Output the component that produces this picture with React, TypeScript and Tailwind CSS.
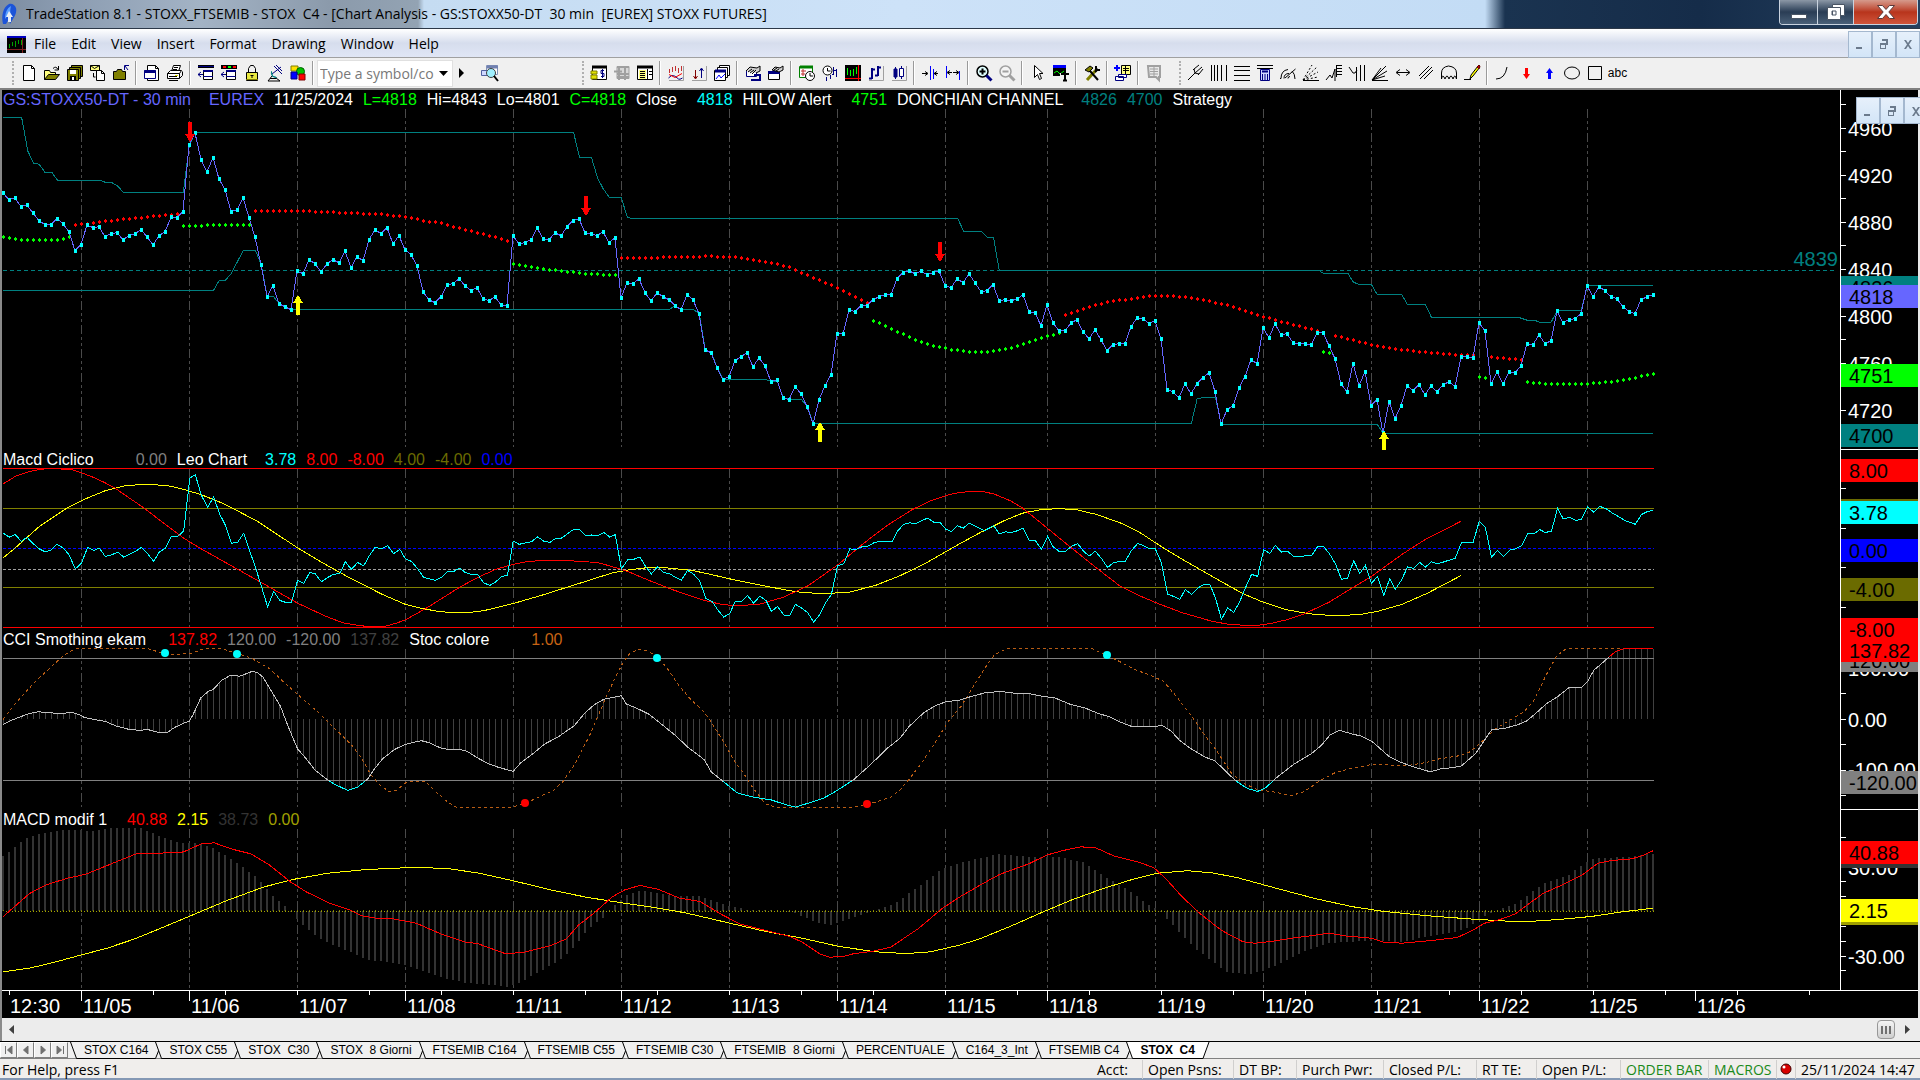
import React from "react";

type Scale = { sx: number; sy: number; dy: number };

// Every series is a flat [x, y, x, y, ...] list in survey units; a scale turns it into plot pixels.
const PRICE: Scale = { sx: 2.45, sy: 3, dy: 8 };
const LEO: Scale = { sx: 1.6333, sy: 2.8, dy: 28 };
const CCI: Scale = { sx: 1.6333, sy: 2.8, dy: 208 };
const MACD: Scale = { sx: 1.6333, sy: 2.8, dy: 388 };

const BARS = 276;
const barX = (i: number) => 3 + 6 * i;
const yOf = (v: number, s: Scale) => v / s.sy - s.dy;

const trace = (d: number[], s: Scale) => {
  const out: string[] = [];
  for (let i = 0; i < d.length; i += 2) {
    out.push(`${(d[i] / s.sx).toFixed(1)},${yOf(d[i + 1], s).toFixed(1)}`);
  }
  return out.join(" ");
};

const shift = (d: number[], by: number) => d.map((v, i) => (i % 2 === 0 ? v + by : v));

// linear interpolation inside a flat series
const at = (d: number[], x: number) => {
  if (x <= d[0]) return d[1];
  for (let i = 2; i < d.length; i += 2) {
    if (x <= d[i]) {
      const t = (x - d[i - 2]) / (d[i] - d[i - 2]);
      return d[i - 1] + t * (d[i + 1] - d[i - 1]);
    }
  }
  return d[d.length - 1];
};

const CLOSES = [
  279, 299, 294, 320, 315, 339, 362, 374, 374, 356, 371, 396, 452, 434, 375, 383, 380, 410, 401, 398, 419, 407, 401,
  389, 410, 434, 407, 395, 352, 353, 335, 134, 99, 179, 215, 173, 237, 269, 335, 329, 293, 353, 411, 494, 590, 557, 611,
  620, 629, 513, 521, 479, 491, 515, 491, 479, 488, 453, 503, 470, 482, 419, 389, 401, 383, 431, 407, 449, 464, 497,
  575, 599, 608, 590, 554, 551, 536, 557, 572, 563, 596, 602, 590, 614, 617, 407, 431, 428, 419, 383, 416, 419, 398,
  407, 380, 362, 356, 398, 401, 407, 395, 428, 413, 593, 548, 551, 536, 578, 602, 578, 590, 599, 617, 629, 584, 599,
  641, 749, 758, 803, 839, 830, 782, 770, 758, 800, 773, 797, 845, 839, 893, 899, 860, 881, 920, 971, 899, 857, 824,
  701, 701, 629, 635, 617, 617, 599, 590, 584, 584, 536, 518, 512, 521, 513, 524, 518, 513, 557, 563, 536, 548, 521,
  548, 575, 572, 554, 602, 599, 602, 597, 584, 635, 638, 677, 614, 668, 692, 692, 668, 659, 695, 716, 689, 719, 752,
  734, 731, 731, 680, 653, 656, 671, 662, 716, 869, 875, 893, 851, 881, 851, 833, 818, 875, 973, 929, 917, 863, 830,
  779, 791, 683, 713, 671, 704, 701, 728, 731, 731, 734, 698, 698, 737, 776, 851, 875, 791, 857, 815, 917, 899, 1000,
  905, 956, 917, 857, 872, 854, 884, 857, 875, 854, 845, 860, 770, 770, 773, 668, 692, 851, 815, 851, 815, 818, 797,
  731, 734, 704, 731, 722, 632, 668, 659, 656, 641, 557, 590, 560, 572, 590, 596, 620, 635, 641, 599, 590, 584,
];

const UPPER = [
  7, 52, 53, 52, 68, 153, 82, 190, 96, 193, 110, 217, 127, 217, 141, 241, 244, 241, 258, 247, 273, 247, 288, 258, 302,
  277, 449, 277, 464, 134, 479, 97, 1405, 97, 1420, 172, 1449, 172, 1464, 234, 1478, 267, 1493, 292, 1522, 292, 1537,
  352, 1547, 355, 2346, 355, 2361, 394, 2404, 394, 2419, 412, 2434, 412, 2448, 511, 3231, 511, 3242, 520, 3302, 520,
  3316, 547, 3330, 553, 3360, 553, 3374, 583, 3434, 583, 3448, 613, 3492, 613, 3507, 652, 3720, 652, 3742, 661, 3760,
  661, 3772, 667, 3800, 667, 3816, 631, 3874, 631, 3889, 556, 4050, 556,
];

const LOWER = [
  7, 571, 523, 571, 537, 541, 552, 541, 566, 522, 581, 487, 596, 451, 626, 451, 640, 494, 655, 590, 670, 590, 684, 611,
  714, 629, 729, 628, 1640, 628, 1654, 617, 1669, 629, 1699, 629, 1713, 641, 1728, 749, 1743, 758, 1757, 803, 1772, 839,
  1878, 839, 1890, 845, 1905, 845, 1919, 895, 1934, 898, 1963, 898, 1978, 920, 1993, 971, 2919, 970, 2933, 897, 2948,
  892, 2978, 892, 2992, 973, 3374, 973, 3389, 1000, 4050, 1000,
];

// x is the bar number here
const HILOW: { up: boolean; d: number[] }[] = [
  { up: true, d: [0, 410, 3, 419, 9, 419, 11, 412] },
  { up: false, d: [12, 375, 16, 366, 20, 358, 24, 351, 29, 342] },
  { up: true, d: [30, 378, 33, 377, 34, 375, 41, 375] },
  { up: false, d: [42, 332, 50, 333, 58, 339, 63, 343, 67, 351, 70, 362, 73, 370, 76, 385, 79, 399, 81, 407, 84, 423] },
  { up: true, d: [85, 491, 88, 500, 91, 509, 94, 515, 97, 521, 100, 524, 102, 524] },
  {
    up: false,
    d: [
      103, 474, 107, 474, 112, 471, 118, 469, 122, 471, 124, 476, 127, 485, 129, 493, 131, 502, 133, 518, 135, 533, 139,
      564, 144, 608,
    ],
  },
  {
    up: true,
    d: [
      145, 662, 149, 695, 152, 720, 154, 732, 156, 741, 158, 749, 160, 753, 162, 756, 164, 756, 166, 750, 168, 744, 170,
      732, 172, 720, 176, 698,
    ],
  },
  {
    up: false,
    d: [
      177, 645, 181, 620, 183, 611, 185, 603, 188, 597, 190, 591, 192, 587, 194, 587, 197, 591, 199, 597, 203, 611, 205,
      620, 209, 645, 213, 665, 219, 692,
    ],
  },
  { up: true, d: [220, 756, 221, 759] },
  { up: false, d: [222, 708, 225, 720, 228, 735, 232, 748, 235, 753, 240, 762, 243, 765, 245, 766] },
  { up: true, d: [246, 830, 247, 833] },
  { up: false, d: [248, 771, 250, 774, 253, 779] },
  { up: true, d: [254, 846, 258, 852, 264, 852, 269, 843, 271, 837, 273, 828, 275, 822] },
];

const LEO_LINE = [
  5, 261, 15, 272, 25, 265, 35, 284, 44, 272, 54, 290, 64, 305, 74, 313, 83, 309, 93, 292, 103, 302, 113, 322, 123, 361,
  133, 345, 143, 301, 153, 309, 162, 303, 172, 326, 182, 322, 192, 314, 202, 328, 211, 320, 221, 312, 231, 301, 241,
  318, 251, 340, 260, 314, 270, 303, 280, 270, 290, 270, 300, 255, 310, 107, 319, 97, 329, 155, 339, 188, 349, 160, 359,
  208, 368, 238, 378, 289, 388, 287, 398, 261, 408, 312, 417, 355, 427, 410, 437, 467, 447, 424, 457, 449, 467, 455,
  476, 455, 486, 393, 496, 401, 506, 371, 515, 375, 525, 397, 535, 385, 545, 376, 555, 374, 564, 341, 574, 362, 584,
  343, 594, 352, 604, 322, 613, 300, 623, 305, 633, 296, 643, 318, 653, 306, 662, 332, 672, 340, 682, 360, 692, 385,
  702, 389, 711, 393, 721, 385, 731, 368, 741, 368, 751, 359, 760, 371, 770, 376, 780, 376, 790, 400, 800, 407, 809,
  398, 819, 383, 829, 378, 838, 283, 848, 292, 858, 288, 868, 285, 878, 271, 888, 283, 898, 287, 907, 276, 917, 275,
  927, 262, 937, 250, 946, 250, 956, 267, 966, 266, 976, 268, 986, 259, 996, 272, 1005, 265, 1015, 361, 1025, 336, 1035,
  334, 1045, 328, 1055, 355, 1064, 375, 1074, 355, 1084, 371, 1094, 375, 1104, 385, 1113, 392, 1123, 365, 1133, 376,
  1143, 395, 1153, 444, 1163, 452, 1172, 475, 1182, 496, 1192, 486, 1201, 451, 1211, 453, 1221, 436, 1231, 457, 1241,
  437, 1251, 449, 1260, 480, 1270, 466, 1280, 490, 1290, 491, 1299, 460, 1309, 470, 1319, 483, 1329, 510, 1339, 489,
  1349, 455, 1358, 432, 1368, 352, 1378, 347, 1388, 305, 1398, 306, 1408, 299, 1417, 298, 1427, 288, 1437, 283, 1457,
  284, 1466, 255, 1476, 236, 1486, 232, 1496, 234, 1505, 226, 1515, 219, 1525, 230, 1535, 230, 1545, 250, 1554, 256,
  1564, 240,
  ...shift(
    [
      5, 247, 15, 233, 27, 243, 40, 254, 55, 240, 64, 263, 74, 257, 84, 259, 94, 254, 103, 246, 113, 281, 123, 281, 133,
      306, 143, 270, 152, 299, 162, 312, 172, 312, 182, 298, 192, 290, 202, 312, 211, 325, 221, 311, 231, 332, 241, 357,
      250, 344, 260, 340, 270, 340, 280, 309, 290, 290, 299, 295, 309, 304, 319, 305, 329, 344, 339, 432, 349, 438, 359,
      446, 368, 419, 378, 432, 388, 415, 398, 405, 408, 404, 417, 441, 427, 502, 437, 470, 447, 483, 457, 452, 466, 415,
      476, 376, 486, 382, 496, 307, 506, 318, 515, 295, 525, 314, 535, 312, 545, 326, 574, 324, 584, 299, 594, 298, 604,
      320, 613, 346, 623, 390, 633, 387, 643, 338, 653, 374, 662, 351, 672, 401, 682, 382, 692, 435, 702, 388, 711, 418,
      721, 392, 731, 355, 741, 360, 751, 343, 760, 356, 770, 341, 780, 347, 809, 331, 819, 287, 838, 287, 848, 228, 858,
      244, 868, 328, 878, 309, 888, 326, 898, 308, 907, 305, 917, 296, 927, 262, 937, 263, 947, 251, 956, 259, 966, 255,
      976, 191, 985, 220, 996, 217, 1006, 225, 1015, 222, 1025, 188, 1035, 202, 1045, 186, 1055, 192, 1065, 204, 1088,
      227, 1103, 236, 1113, 209, 1123, 200, 1132, 197,
    ],
    1568
  ),
];

const CYCLE_RED = [
  5, 123, 25, 102, 45, 90, 65, 82, 80, 80, 115, 82, 135, 93, 155, 106, 172, 120, 188, 135, 205, 155, 235, 190, 265, 230,
  300, 275, 330, 306, 387, 361, 440, 412, 486, 457, 530, 492, 560, 512, 585, 519, 605, 523, 628, 522, 645, 514, 662,
  504, 700, 467, 750, 413, 780, 385, 810, 362, 838, 348, 860, 341, 880, 338, 930, 338, 975, 343, 995, 352, 1025, 368,
  1060, 393, 1100, 420, 1150, 449, 1180, 461, 1205, 464, 1240, 460, 1280, 440, 1320, 408, 1368, 350, 1410, 290, 1450,
  238, 1490, 195, 1520, 170, 1550, 153, 1568, 147, 1580, 145, 1608, 145, 1625, 152, 1650, 170, 1668, 188, 1690, 218,
  1740, 288, 1790, 357, 1830, 410, 1860, 435, 1890, 457, 1930, 483, 1980, 508, 2010, 517, 2050, 520, 2075, 514, 2100,
  504, 2130, 487, 2170, 455, 2200, 423, 2240, 382, 2290, 320, 2330, 276, 2386, 228,
];

const CYCLE_YELLOW = [
  5, 330, 25, 302, 65, 241, 110, 190, 135, 168, 172, 142, 205, 128, 235, 124, 272, 127, 300, 138, 330, 154, 365, 178,
  420, 227, 486, 302, 530, 347, 570, 385, 625, 433, 662, 460, 690, 472, 720, 481, 760, 484, 790, 478, 838, 458, 890,
  432, 960, 394, 1000, 372, 1030, 363, 1060, 357, 1090, 358, 1130, 365, 1160, 376, 1200, 392, 1250, 409, 1300, 425,
  1340, 430, 1385, 427, 1430, 407, 1470, 380, 1510, 347, 1568, 290, 1600, 260, 1640, 226, 1670, 205, 1700, 195, 1731,
  192, 1760, 196, 1790, 208, 1830, 232, 1860, 257, 1900, 302, 1940, 343, 1990, 392, 2030, 430, 2060, 452, 2100, 475,
  2140, 487, 2180, 492, 2220, 489, 2250, 480, 2290, 460, 2330, 430, 2386, 380,
];

const CCI_LINE = [
  5, 796, 20, 784, 35, 774, 50, 765, 62, 761, 80, 763, 95, 766, 118, 763, 128, 768, 138, 777, 152, 782, 172, 788, 190,
  801, 210, 810, 230, 813, 240, 810, 262, 820, 274, 818, 285, 805, 300, 793, 309, 788, 315, 770, 328, 722, 340, 704,
  348, 699, 362, 673, 375, 660, 392, 661, 400, 656, 410, 649, 420, 650, 430, 665, 445, 708, 458, 745, 470, 800, 486,
  865, 500, 892, 515, 925, 530, 945, 545, 963, 568, 981, 584, 972, 600, 950, 612, 920, 625, 892, 645, 866, 662, 852,
  688, 842, 700, 847, 712, 857, 725, 865, 752, 867, 762, 871, 785, 895, 800, 908, 815, 917, 838, 928, 850, 905, 870,
  879, 890, 851, 910, 833, 938, 800, 955, 765, 970, 742, 986, 726, 1015, 716, 1023, 739, 1045, 755, 1060, 768, 1080,
  795, 1105, 830, 1123, 860, 1150, 895, 1162, 930, 1182, 957, 1204, 988, 1228, 999, 1260, 1008, 1285, 1022, 1299, 1028,
  1320, 1017, 1345, 1003, 1365, 984, 1395, 950, 1420, 912, 1450, 862, 1470, 835, 1485, 802, 1510, 762, 1530, 742, 1545,
  733, 1568, 728,
  ...shift(
    [
      15, 720, 40, 708, 65, 704, 90, 709, 115, 711, 135, 718, 155, 722, 180, 740, 205, 751, 225, 765, 245, 776, 262,
      790, 280, 802, 320, 802, 330, 799, 345, 815, 358, 840, 375, 862, 400, 888, 415, 897, 430, 920, 440, 938, 455, 960,
      470, 976, 486, 984, 500, 973, 515, 948, 545, 908, 575, 877, 590, 855, 605, 825, 620, 813, 640, 823, 655, 829, 672,
      843, 685, 862, 700, 885, 718, 901, 740, 915, 768, 929, 785, 921, 800, 918, 818, 914, 830, 896, 842, 878, 855, 845,
      868, 812, 890, 807, 910, 798, 925, 787, 940, 766, 958, 738, 975, 720, 995, 693, 1015, 693, 1025, 676, 1035, 645,
      1060, 608, 1070, 593, 1085, 584, 1132, 584,
    ],
    1568
  ),
];

const STOC = [
  5, 782, 25, 738, 60, 672, 103, 605, 115, 592, 128, 583, 240, 583, 265, 597, 290, 601, 315, 596, 335, 583, 360, 583,
  388, 598, 410, 610, 440, 640, 465, 680, 486, 712, 520, 763, 545, 805, 575, 855, 590, 890, 605, 935, 618, 963, 635,
  984, 648, 980, 665, 957, 695, 957, 712, 985, 730, 1012, 745, 1028, 838, 1028, 865, 1012, 905, 980, 920, 955, 940, 905,
  965, 820, 990, 720, 1005, 665, 1018, 622, 1030, 595, 1045, 586, 1060, 592, 1075, 610, 1090, 640, 1110, 690, 1130, 730,
  1145, 752, 1158, 780, 1180, 840, 1200, 900, 1215, 935, 1230, 975, 1250, 1018, 1265, 1028, 1395, 1028, 1430, 1014,
  1455, 1000, 1470, 980, 1485, 950, 1505, 905, 1530, 840, 1550, 785, 1570, 745, 1590, 690, 1610, 635, 1625, 600, 1645,
  584, 1783, 584, 1800, 597, 1825, 617, 1850, 640, 1880, 660, 1900, 675, 1920, 715, 1945, 770, 1965, 820, 1985, 865,
  2010, 930, 2030, 960, 2055, 980, 2080, 985, 2108, 996, 2130, 985, 2155, 955, 2180, 932, 2210, 918, 2240, 909, 2300,
  911, 2330, 903, 2350, 893, 2380, 885, 2400, 874, 2415, 853, 2440, 812, 2470, 780, 2490, 760, 2505, 730, 2525, 660,
  2542, 605, 2558, 584, 2700, 584,
];

const MACD_HIST = [
  5, 1165, 25, 1140, 45, 1112, 65, 1104, 90, 1094, 110, 1092, 150, 1094, 165, 1093, 180, 1087, 230, 1087, 245, 1098,
  270, 1115, 300, 1130, 320, 1127, 345, 1140, 370, 1166, 400, 1200, 420, 1225, 445, 1275, 470, 1312, 490, 1350, 520,
  1395, 560, 1425, 600, 1455, 650, 1465, 680, 1480, 720, 1504, 760, 1520, 800, 1525, 830, 1533, 850, 1518, 880, 1490,
  920, 1450, 935, 1425, 960, 1370, 985, 1338, 1000, 1310, 1020, 1278, 1045, 1262, 1070, 1266, 1100, 1278, 1140, 1277,
  1160, 1288, 1190, 1305, 1220, 1315, 1280, 1318, 1300, 1326, 1340, 1355, 1360, 1358, 1390, 1340, 1430, 1315, 1460,
  1300, 1500, 1250, 1540, 1200, 1568, 1185, 1600, 1171, 1632, 1159, 1670, 1166, 1730, 1168, 1770, 1183, 1800, 1218,
  1840, 1258, 1880, 1305, 1895, 1320, 1905, 1340, 1950, 1420, 1980, 1460, 2005, 1490, 2040, 1495, 2060, 1488, 2080,
  1474, 2110, 1449, 2140, 1425, 2170, 1408, 2250, 1401, 2290, 1407, 2320, 1393, 2375, 1378, 2400, 1363, 2430, 1327,
  2450, 1315, 2480, 1295, 2520, 1242, 2560, 1220, 2585, 1190, 2605, 1170, 2660, 1168, 2700, 1158,
];

const MACD_RED = [
  5, 1335, 20, 1312, 48, 1270, 75, 1246, 110, 1227, 140, 1216, 180, 1188, 225, 1157, 290, 1156, 300, 1153, 330, 1130,
  350, 1128, 380, 1146, 410, 1159, 440, 1190, 475, 1238, 500, 1265, 540, 1298, 570, 1315, 590, 1332, 615, 1339, 640,
  1340, 680, 1353, 720, 1383, 760, 1406, 780, 1410, 825, 1438, 855, 1435, 900, 1415, 925, 1397, 945, 1358, 970, 1325,
  1000, 1279, 1020, 1260, 1045, 1247, 1075, 1258, 1110, 1283, 1143, 1292, 1180, 1330, 1210, 1356, 1250, 1373, 1290,
  1390, 1310, 1406, 1340, 1440, 1355, 1448, 1375, 1447, 1395, 1438, 1425, 1432, 1455, 1420, 1500, 1368, 1540, 1310,
  1568, 1279, 1600, 1247, 1632, 1217, 1680, 1187, 1710, 1162, 1735, 1150, 1765, 1139, 1790, 1142, 1820, 1165, 1860,
  1182, 1885, 1198, 1905, 1230, 1930, 1278, 1960, 1326, 1995, 1373, 2030, 1405, 2050, 1409, 2080, 1403, 2110, 1395,
  2150, 1386, 2170, 1381, 2200, 1389, 2240, 1395, 2260, 1406, 2290, 1409, 2340, 1401, 2380, 1393, 2405, 1373, 2425,
  1353, 2450, 1343, 2475, 1327, 2500, 1295, 2520, 1270, 2555, 1243, 2585, 1217, 2610, 1185, 2630, 1178, 2665, 1173,
  2685, 1162, 2700, 1150,
];

const MACD_YELLOW = [
  5, 1489, 50, 1478, 90, 1462, 130, 1443, 175, 1423, 220, 1397, 270, 1362, 320, 1326, 370, 1290, 430, 1252, 480, 1230,
  535, 1213, 590, 1204, 640, 1199, 690, 1197, 735, 1201, 780, 1212, 838, 1234, 900, 1260, 960, 1281, 1020, 1297, 1065,
  1308, 1120, 1324, 1190, 1352, 1250, 1376, 1310, 1395, 1370, 1418, 1430, 1433, 1480, 1438, 1520, 1433, 1568, 1414,
  1600, 1397, 1650, 1362, 1700, 1324, 1750, 1288, 1800, 1257, 1850, 1230, 1890, 1213, 1940, 1206, 1980, 1212, 2020,
  1225, 2080, 1253, 2150, 1285, 2210, 1307, 2260, 1320, 2330, 1332, 2400, 1341, 2460, 1347, 2500, 1348, 2550, 1342,
  2600, 1334, 2650, 1321, 2700, 1311,
];

const DAYS: { x: number; label: string }[] = [
  { x: 81, label: "11/05" },
  { x: 189, label: "11/06" },
  { x: 297, label: "11/07" },
  { x: 405, label: "11/08" },
  { x: 513, label: "11/11" },
  { x: 621, label: "11/12" },
  { x: 729, label: "11/13" },
  { x: 837, label: "11/14" },
  { x: 945, label: "11/15" },
  { x: 1047, label: "11/18" },
  { x: 1155, label: "11/19" },
  { x: 1263, label: "11/20" },
  { x: 1371, label: "11/21" },
  { x: 1479, label: "11/22" },
  { x: 1587, label: "11/25" },
  { x: 1695, label: "11/26" },
];
const LONG_TICKS = [81, 189, 405, 621, 837, 1047, 1263, 1479, 1695];
const SHORT_TICKS = [
  9, 153, 225, 297, 369, 441, 513, 585, 657, 729, 801, 873, 945, 1017, 1089, 1161, 1233, 1305, 1377, 1449, 1521, 1593,
  1665, 1737, 1809,
];

/* ---------- chart ---------- */

function DayLines({ bottom }: { bottom: number }) {
  return (
    <g stroke="#4a4a4a" strokeDasharray="9 3 3 3 3 3">
      {DAYS.slice(0, -1).map((d) => (
        <line key={d.x} x1={d.x + 0.5} x2={d.x + 0.5} y1={1} y2={bottom} />
      ))}
    </g>
  );
}

function Level({ y, color, dash, to = 1654 }: { y: number; color: string; dash?: string; to?: number }) {
  return <line x1={3} x2={to} y1={y} y2={y} stroke={color} strokeDasharray={dash} />;
}

function Arrow({ x, y, down }: { x: number; y: number; down?: boolean }) {
  const d = down ? "M-2 -19h4v12h3l-5 8l-5 -8h3z" : "M-2 19h4v-12h3l-5 -8l-5 8h3z";
  return <path d={d} transform={`translate(${x} ${y})`} fill={down ? "#ff0000" : "#ffff00"} />;
}

function PricePlot() {
  const closeLine = CLOSES.map((c, i) => `${barX(i)},${yOf(c, PRICE).toFixed(1)}`).join(" ");
  return (
    <svg className="block h-[342px] w-full" shapeRendering="crispEdges" fill="none">
      <DayLines bottom={339} />
      <polyline points={trace(UPPER, PRICE)} stroke="#008080" />
      <polyline points={trace(LOWER, PRICE)} stroke="#008080" />
      <Level y={162.5} color="#008080" dash="4 3" to={1836} />
      <text x={1838} y={158} textAnchor="end" fill="#008080" fontSize={20}>
        4839
      </text>
      {HILOW.map((seg) => {
        const first = seg.d[0];
        const last = seg.d[seg.d.length - 2];
        const dots = [];
        for (let i = first; i <= last; i++) {
          const y = Math.round(yOf(at(seg.d, i), PRICE));
          dots.push(`M${barX(i)} ${y - 2}h1v1h1v2h-1v1h-1v-1h-1v-2h1z`);
        }
        return <path key={first} d={dots.join("")} fill={seg.up ? "#00ff00" : "#ff0000"} />;
      })}
      <polyline points={closeLine} stroke="#6666ff" />
      <path
        fill="#00ffff"
        d={CLOSES.map((c, i) => `M${barX(i) - 1} ${Math.round(yOf(c, PRICE)) - 2}h3v4h-3z`).join("")}
      />
      <Arrow x={190} y={33} down />
      <Arrow x={586} y={107} down />
      <Arrow x={940} y={153} down />
      <Arrow x={298} y={188} />
      <Arrow x={820} y={315} />
      <Arrow x={1384} y={324} />
    </svg>
  );
}

function LeoPlot() {
  return (
    <svg className="block h-[162px] w-full" shapeRendering="crispEdges" fill="none">
      <DayLines bottom={159} />
      <Level y={0.5} color="#ff0000" />
      <Level y={40.5} color="#808000" />
      <Level y={80.5} color="#0000ff" dash="3 2" />
      <Level y={101.5} color="#a0a0a0" dash="3 2" />
      <Level y={119.5} color="#808000" />
      <Level y={159.5} color="#ff0000" />
      <polyline points={trace(CYCLE_YELLOW, LEO)} stroke="#ffff00" />
      <polyline points={trace(CYCLE_RED, LEO)} stroke="#ff0000" />
      <polyline points={trace(LEO_LINE, LEO)} stroke="#00ffff" />
    </svg>
  );
}

function CciPlot() {
  const zero = 71;
  const line = trace(CCI_LINE, CCI);
  return (
    <svg className="block h-[162px] w-full" shapeRendering="crispEdges" fill="none">
      <clipPath id="oversold">
        <rect x={0} y={133} width={1700} height={40} />
      </clipPath>
      <clipPath id="overbought">
        <rect x={0} y={-8} width={1700} height={17} />
      </clipPath>
      <DayLines bottom={159} />
      <path
        stroke="#404040"
        d={Array.from({ length: BARS }, (_, i) => {
          const x = barX(i) + 0.5;
          return `M${x} ${zero}V${yOf(at(CCI_LINE, x * CCI.sx), CCI).toFixed(0)}`;
        }).join("")}
      />
      <Level y={10.5} color="#808080" />
      <Level y={132.5} color="#808080" />
      <polyline points={trace(STOC, CCI)} stroke="#b85c14" strokeDasharray="3 3" />
      <polyline points={line} stroke="#c0c0c0" />
      <polyline points={line} stroke="#00ffff" clipPath="url(#oversold)" />
      <polyline points={line} stroke="#ff0000" clipPath="url(#overbought)" />
      <g fill="#00ffff" shapeRendering="auto">
        <circle cx={165} cy={5} r={4} />
        <circle cx={237} cy={6} r={4} />
        <circle cx={657} cy={10} r={4} />
        <circle cx={1107} cy={7} r={4} />
      </g>
      <g fill="#ff0000" shapeRendering="auto">
        <circle cx={525} cy={155} r={4} />
        <circle cx={867} cy={156} r={4} />
      </g>
    </svg>
  );
}

function MacdPlot() {
  const zero = 83;
  return (
    <svg className="block h-[162px] w-full" shapeRendering="crispEdges" fill="none">
      <DayLines bottom={162} />
      <path
        stroke="#333333"
        strokeWidth={2}
        d={Array.from({ length: BARS }, (_, i) => {
          const x = barX(i);
          return `M${x} ${zero}V${yOf(at(MACD_HIST, x * MACD.sx), MACD).toFixed(0)}`;
        }).join("")}
      />
      <Level y={82.5} color="#808000" dash="1 5" />
      <line x1={6} x2={1654} y1={83.5} y2={83.5} stroke="#a0a000" strokeDasharray="1 2" />
      <polyline points={trace(MACD_YELLOW, MACD)} stroke="#ffff00" />
      <polyline points={trace(MACD_RED, MACD)} stroke="#ff0000" />
    </svg>
  );
}

type Tag = { y: number; text?: string; bg: string; h?: number };

// Labels first, then the coloured tags over them.
function Axis({ ticks, labels, tags }: { ticks: number[]; labels: { y: number; text: string }[]; tags: Tag[] }) {
  return (
    <svg className="block h-full w-full overflow-visible" shapeRendering="crispEdges" fontSize={20}>
      <path stroke="#ffffff" d={ticks.map((t) => `M0 ${t + 0.5}h5`).join("")} />
      {labels.map((l) => (
        <text key={l.text} x={7} y={l.y + 8} fill="#ffffff">
          {l.text}
        </text>
      ))}
      {tags.map((t) => (
        <g key={`${t.y}${t.bg}`}>
          <rect x={0} y={t.y} width={77} height={t.h ?? 23} fill={t.bg} />
          {t.text && (
            <text x={8} y={t.y + 19} fill="#000000">
              {t.text}
            </text>
          )}
        </g>
      ))}
    </svg>
  );
}

type Reading = { t: string; c: string };

function Panel({
  readings,
  plot,
  axis,
  last,
}: {
  readings: Reading[];
  plot: React.ReactNode;
  axis: React.ReactNode;
  last?: boolean;
}) {
  return (
    <section className="grid grid-cols-[1fr_78px]">
      <div className="min-w-0">
        <div className="flex h-[18px] items-center gap-[10px] whitespace-pre pt-[2px] pl-[3px] text-[16px] leading-[18px]">
          {readings.map((r, i) => (
            <span key={i} className={r.c}>
              {r.t}
            </span>
          ))}
        </div>
        {plot}
      </div>
      <div className={`border-l border-white ${last ? "" : "border-b"}`}>{axis}</div>
    </section>
  );
}

function TimeAxis() {
  return (
    <svg className="block h-[28px] w-full border-t border-white" shapeRendering="crispEdges" fontSize={20} fill="#ffffff">
      <path
        stroke="#ffffff"
        d={
          LONG_TICKS.map((x) => `M${x - 1.5} 0v10`).join("") + SHORT_TICKS.map((x) => `M${x - 1.5} 0v4`).join("")
        }
      />
      <text x={8} y={22}>
        12:30
      </text>
      {DAYS.map((d) => (
        <text key={d.label} x={d.x} y={22}>
          {d.label}
        </text>
      ))}
    </svg>
  );
}

function Chart() {
  return (
    <main className="relative border-l-2 border-[#8a8a8a] bg-black text-white">
      <div className="-ml-[2px] border-r-2 border-[#e8e8e8]">
        <Panel
          readings={[
            { t: "GS:STOXX50-DT - 30 min", c: "text-[#6666ff]" },
            { t: "EUREX", c: "text-[#6666ff] ml-2" },
            { t: "11/25/2024", c: "" },
            { t: "L=4818", c: "text-[#00ff00]" },
            { t: "Hi=4843", c: "" },
            { t: "Lo=4801", c: "" },
            { t: "C=4818", c: "text-[#00ff00]" },
            { t: "Close", c: "" },
            { t: "4818", c: "text-[#00ffff] ml-[10px]" },
            { t: "HILOW Alert", c: "" },
            { t: "4751", c: "text-[#00ff00] ml-[10px]" },
            { t: "DONCHIAN CHANNEL", c: "" },
            { t: "4826", c: "text-[#008080] ml-2" },
            { t: "4700", c: "text-[#008080]" },
            { t: "Strategy", c: "" },
          ]}
          plot={<PricePlot />}
          axis={
            <Axis
              ticks={[14, 38, 61, 85, 108, 132, 155, 179, 202, 226, 249, 273, 296, 320]}
              labels={[
                { y: 38, text: "4960" },
                { y: 85, text: "4920" },
                { y: 132, text: "4880" },
                { y: 179, text: "4840" },
                { y: 226, text: "4800" },
                { y: 273, text: "4760" },
                { y: 320, text: "4720" },
              ]}
              tags={[
                { y: 186, text: "4826", bg: "#008080" },
                { y: 195, text: "4818", bg: "#6666ff" },
                { y: 274, text: "4751", bg: "#00ff00" },
                { y: 334, text: "4700", bg: "#008080" },
              ]}
            />
          }
        />
        <Panel
          readings={[
            { t: "Macd Ciclico", c: "" },
            { t: "0.00", c: "text-[#808080] ml-8" },
            { t: "Leo Chart", c: "" },
            { t: "3.78", c: "text-[#00ffff] ml-2" },
            { t: "8.00", c: "text-[#ff0000]" },
            { t: "-8.00", c: "text-[#ff0000]" },
            { t: "4.00", c: "text-[#6b6b00]" },
            { t: "-4.00", c: "text-[#6b6b00]" },
            { t: "0.00", c: "text-[#0000ff]" },
          ]}
          plot={<LeoPlot />}
          axis={
            <Axis
              ticks={[38, 78, 117, 157]}
              labels={[]}
              tags={[
                { y: 9, text: "8.00", bg: "#ff0000" },
                { y: 49, bg: "#6b6b00" },
                { y: 51, text: "3.78", bg: "#00ffff" },
                { y: 89, text: "0.00", bg: "#0000ff" },
                { y: 128, text: "-4.00", bg: "#6b6b00" },
              ]}
            />
          }
        />
        <Panel
          readings={[
            { t: "CCI Smothing ekam", c: "" },
            { t: "137.82", c: "text-[#ff0000] ml-3" },
            { t: "120.00", c: "text-[#808080]" },
            { t: "-120.00", c: "text-[#808080]" },
            { t: "137.82", c: "text-[#404040]" },
            { t: "Stoc colore", c: "" },
            { t: "1.00", c: "text-[#c86414] ml-8" },
          ]}
          plot={<CciPlot />}
          axis={
            <Axis
              ticks={[63, 89, 114, 140, 165]}
              labels={[
                { y: 38, text: "100.00" },
                { y: 89, text: "0.00" },
                { y: 139, text: "-100.00" },
              ]}
              tags={[
                { y: 19, text: "120.00", bg: "#808080" },
                { y: -12, text: "-8.00", bg: "#ff0000" },
                { y: 9, text: "137.82", bg: "#ff0000" },
                { y: 141, text: "-120.00", bg: "#808080" },
              ]}
            />
          }
        />
        <Panel
          last
          readings={[
            { t: "MACD modif 1", c: "" },
            { t: "40.88", c: "text-[#ff0000] ml-[10px]" },
            { t: "2.15", c: "text-[#ffff00]" },
            { t: "38.73", c: "text-[#333333]" },
            { t: "0.00", c: "text-[#a0a000]" },
          ]}
          plot={<MacdPlot />}
          axis={
            <Axis
              ticks={[27, 71, 86, 116, 131, 146, 160]}
              labels={[
                { y: 57, text: "30.00" },
                { y: 146, text: "-30.00" },
              ]}
              tags={[
                { y: 35, bg: "#333333" },
                { y: 31, text: "40.88", bg: "#ff0000" },
                { y: 92, bg: "#a0a000" },
                { y: 89, text: "2.15", bg: "#ffff00" },
              ]}
            />
          }
        />
      </div>
      <div className="border-r-2 border-[#e8e8e8]">
        <TimeAxis />
      </div>
      <div className="absolute -right-2 top-[7px] flex">
        <MdiButtons />
      </div>
    </main>
  );
}

/* ---------- window chrome ---------- */

function MdiButtons() {
  const shapes = [
    { label: "Minimize window", d: "M1 9h6v2H1z" },
    { label: "Restore window", d: "M3 1h6v6H7V3H3zM1 5h6v6H1zM2 7v3h4V7z" },
    { label: "Close window", d: "M1 2h2l2 3 2-3h2L6 6.5 9 11H7L5 8l-2 3H1l3-4.5z" },
  ];
  return (
    <>
      {shapes.map((s) => (
        <button
          key={s.label}
          type="button"
          aria-label={s.label}
          className="flex h-[27px] w-6 items-center justify-center border border-[#a4b8cf] bg-gradient-to-b from-[#e6f0fb] to-[#d3e5f7]"
        >
          <svg width="10" height="12" viewBox="0 0 10 12" fill="#6b7a8c" fillRule="evenodd">
            <path d={s.d} />
          </svg>
        </button>
      ))}
    </>
  );
}

function TitleBar() {
  return (
    <header className="flex h-[29px] items-start justify-between border-b border-[#2c3848] bg-[linear-gradient(90deg,#7d8da1_0px,#8a9bb0_60px,#a3b3c5_200px,#8b9aab_330px,#93a3b3_418px,#c5dcf2_424px,#cde2f8_900px,#c3dcf5_1485px,#1a3350_1505px,#152c49_1700px,#24405f_1920px)]">
      <div className="flex h-7 items-center">
        <svg className="ml-[1px] h-6 w-4" viewBox="0 0 16 24">
          <path d="M2 22C0 14 2 5 8 2c3-1 6 1 7 4 1 4-1 8-3 11L9 22l-1-5-3 5z" fill="#1c54d8" />
          <path d="M4 17C4 11 6 6 10 4c-1 4-1 6 0 9l-3 0z" fill="#5aa0ff" />
          <path d="M8 9l4 6h-2v5H7v-5H5z" fill="#e8eef8" />
        </svg>
        <h1 className="ml-[9px] whitespace-pre font-['Open_Sans',sans-serif] text-[14px] leading-7 text-black">
          {"TradeStation 8.1 - STOXX_FTSEMIB - STOX  C4 - [Chart Analysis - GS:STOXX50-DT  30 min  [EUREX] STOXX FUTURES]"}
        </h1>
      </div>
      <div className="mr-[2px] flex h-[25px] overflow-hidden rounded-b border border-t-0 border-[#c9d3df]">
        <button type="button" aria-label="Minimize" className="flex w-[38px] items-end justify-center border-r border-[#c9d3df] bg-gradient-to-b from-[#8c98a6] via-[#2a3d55] to-[#4a6078] pb-[5px]">
          <span className="h-[5px] w-4 border border-[#4a5564] bg-white" />
        </button>
        <button type="button" aria-label="Restore" className="flex w-9 items-center justify-center border-r border-[#c9d3df] bg-gradient-to-b from-[#8c98a6] via-[#2a3d55] to-[#4a6078]">
          <svg width="20" height="18" viewBox="0 0 20 18" fill="#ffffff" stroke="#4a5564" fillRule="evenodd">
            <path d="M6.500 1.500h12v11h-12z" />
            <path d="M1.500 4.500h13v12h-13zM6 8v4h4V8z" />
          </svg>
        </button>
        <button type="button" aria-label="Close" className="flex w-[63px] items-center justify-center bg-gradient-to-b from-[#d59a8c] via-[#b8341c] to-[#d0543a]">
          <svg width="20" height="16" viewBox="0 0 20 16">
            <path d="M1.500 1.500h5L10 5.500l3.500-4h5L12.800 8l5.700 6.500h-5L10 10.500l-3.500 4h-5L7.200 8z" fill="#ffffff" stroke="#5a3a3a" />
          </svg>
        </button>
      </div>
    </header>
  );
}

function MenuBar() {
  const items = ["File", "Edit", "View", "Insert", "Format", "Drawing", "Window", "Help"];
  return (
    <nav className="flex h-[29px] items-center justify-between border-b border-[#a0a0a0] bg-gradient-to-b from-white via-[#d6dded] to-[#e0e6f5] font-['Open_Sans',sans-serif] text-[14px]">
      <div className="flex items-center gap-[15px] pt-[2px] pl-[7px]">
        <svg className="-mr-[7px]" width="19" height="17" viewBox="0 0 19 17" shapeRendering="crispEdges">
          <rect width="19" height="17" fill="#000000" />
          <rect width="19" height="2" fill="#0000c0" />
          <path d="M2.500 12V8M5.500 10V6M8.500 11V5M11.500 8V4M14.500 9V4" stroke="#00a000" />
          <path d="M0 13.500h19M15.500 2v15" stroke="#802020" />
        </svg>
        {items.map((m) => (
          <button key={m} type="button" className="leading-5">
            {m}
          </button>
        ))}
      </div>
      <div className="flex pt-[2px]">
        <MdiButtons />
      </div>
    </nav>
  );
}

/* ---------- toolbar ---------- */

const S = ({ d, s = "#000000", f = "none", w = 1 }: { d: string; s?: string; f?: string; w?: number }) => (
  <path d={d} stroke={s} fill={f} strokeWidth={w} />
);

const NAVY = "#000080";
const OLIVE = "#808000";
const GRAY = "#a0a0a0";

const FILE_ICONS: [string, React.ReactNode][] = [
  ["New", <><S d="M2.500 .5h8l3 3v12h-11z" f="#ffffff" /><S d="M10.500 .5v3h3" /></>],
  ["Open", <><S d="M.5 14.500V5.500h5l1 2h5v2" f="#ffff80" /><S d="M.5 14.500l4-5h11l-4 5z" f={OLIVE} /><S d="M9 3.500q3-3 5 1M14.500 1v4h-4" /></>],
  ["Save all", <><S d="M4.500 .5h11v11h-11z" f={OLIVE} /><S d="M2.500 2.500h11v11h-11z" f={OLIVE} /><S d="M.5 4.500h11v11H.5z" f={OLIVE} /><S d="M3 5h6v4H3z" s="none" f="#ffffff" /><S d="M3 11h6v5H3z" s="none" f="#000000" /><S d="M5 12h2v3H5z" s="none" f="#ffffff" /></>],
  ["Import", <><S d="M.5 .5h9v5h-9z" f="#ffff80" /><S d="M.5 .5l4 3 5-3" /><S d="M6.500 5.500h5l3 3v7h-8z" f="#ffffff" /><S d="M11.500 5.500v3h3M3.500 8v4h2" /></>],
  ["Close folder", <><S d="M.5 14.500V6.500h3l1-2h4l1 2h3v8z" f={OLIVE} /><S d="M15 5L12 1M11.500 5V.5H16" s={NAVY} /></>],
];

const PRINT_ICONS: [string, React.ReactNode][] = [
  ["Print preview", <><S d="M3.500 .5h8l3 3v12h-11z" f="#ffffff" /><S d="M.5 5.500h11v8H.5z" s={NAVY} f="#ffffff" /><S d="M.5 6.500h11" s={NAVY} w={3} /><S d="M11.500 .5v3h3" /></>],
  ["Print", <><S d="M4.500 6.500l2-6h7l-2 6z" f="#ffffff" /><S d="M.5 8.500l3-3h11l-2 3zM.5 8.500h12v5H.5z" f="#ffffff" /><S d="M12.500 13.500l3-3v-4M2 15.500h9M7 2.500h4M6 4.500h4M2 11.500h8" /><S d="M8 10.500h3" s="#e0e000" /></>],
];

const WINDOW_ICONS: [string, React.ReactNode][] = [
  ["Symbol list", <><S d="M0 1.500h16" w={3} /><S d="M0 1.500h16" s={NAVY} /><S d="M5.500 5.500h9v9h-9z" f="#ffffff" /><S d="M5 6h10" s={NAVY} w={2} /><S d="M5 11.500h10" s={NAVY} /><S d="M0 9.500h5M3 7l-3 2.500L3 12" s={NAVY} /></>],
  ["Interval", <><S d="M0 2h16" w={4} /><S d="M2 2h3M12 2h3" s="#ff0000" w={2} /><S d="M7 2h3" s="#00ff00" w={2} /><S d="M5.500 5.500h9v9h-9z" f="#ffffff" /><S d="M5 6h10" s={NAVY} w={2} /><S d="M5 11.500h10" s={NAVY} /><S d="M0 9.500h5M3 7l-3 2.500L3 12" s={NAVY} /></>],
  ["Lock", <><S d="M4.500 7V3.500l2-3h3l2 3V7" /><S d="M2.500 7.500h11v8h-11z" f="#e8e840" /><S d="M2 14.500h12" s={OLIVE} /><S d="M8 10v3M6.500 10.500h3" w={1} /></>],
  ["Satellite", <><S d="M7 1l8 8M9 0l6 6M5 9l9-7" s={NAVY} /><S d="M4.500 6.500q-1 5 5 6l-4-1z" f="#e0ffff" s="#008080" /><S d="M5 11l-4 5h12l-4-3M3 13.500h6" /></>],
  ["Blocks", <><S d="M1 1h7v5H1z" s="#808000" f="#ffe000" /><S d="M10.500 6.500m-4 0a4 4 0 1 0 8 0a4 4 0 1 0 -8 0" f="#00c000" s="#006000" /><S d="M1 7h6v7H1z" f="#0000ff" s={NAVY} /><S d="M9 9h6v6H9z" f="#ff0000" s="#800000" /></>],
];

const ORDER_ICONS: [string, React.ReactNode][] = [
  ["Account", <><S d="M1.500 1.500h14v13h-14z" f="#ffffff" /><S d="M1 2h15" w={3} /><S d="M0 6h6v3H0zM0 10h6v4H0z" f="#e0e000" s={OLIVE} /><S d="M13 5.500h-3v3h3v3h-3M11.500 4v9" s={NAVY} /></>],
  ["Matrix", <><S d="M3 1.500h12v12H3z" s={GRAY} f="#d8d8d8" /><S d="M3 2h12M0 6.500h8M3 9h12M3 12h12M11 3v12M5 3v12" s={GRAY} w={2} /></>],
  ["Order list", <><S d="M.5 1.500h15v13H.5z" f="#ffffff" /><S d="M0 2h16" w={3} /><S d="M2 5h7v9H2z" s="none" f="#ffff80" /><S d="M3 6.500h5M3 8.500h5M3 10.500h5M3 12.500h5M10.500 4v11M12 6.500h3M12 9.500h3" /></>],
];

const STUDY_ICONS: [string, React.ReactNode][] = [
  ["Insert study", <><S d="M1.500 4V8M4.500 2v5M7.500 1v5M10.500 3v5M13.500 1v5" s="#c03030" /><S d="M.5 13q3-4 6-2t4 3 4-1" s={NAVY} /><S d="M1 9.500l6 3 7-4" s="#ff0000" /><S d="M15.500 1v14.500H1" s={GRAY} /></>],
  ["Insert strategy", <><S d="M4.500 5v8M2.500 11l2 3 2-3" s="#800000" /><S d="M10.500 13V4M8.500 6l2-3 2 3" s={NAVY} /><S d="M15.500 1v14.500H1" s={GRAY} /></>],
  ["Format study", <><S d="M5.500 .5h10v10h-10z" f="#ffffff" /><S d="M3.500 2.500h10v10h-10z" f="#ffffff" /><S d="M.5 5.500h11v10H.5z" f="#ffffff" /><S d="M1 6h11" s={NAVY} w={3} /><S d="M2 14l3-4 2 3 4-4" s="#0000ff" /></>],
];

const DATA_ICONS: [string, React.ReactNode][] = [
  ["Edit data", <><S d="M1.500 5.500h10v6h-10z" f="#ffffff" s={NAVY} /><S d="M1 6l4-4 7 1 3-2v5l-4 2" f="#d0d0d0" /><S d="M9 10h6v5H6" s={NAVY} w={2} /><S d="M3 7l4-3M5 8l4-3M7 9l4-4" /></>],
  ["Send data", <><S d="M.5 6.500h11v8H.5z" f="#ffffff" /><S d="M0 7.500h12" s={NAVY} w={3} /><S d="M4 5l3-3 5 1 3-2v4l-4 2z" f="#d0d0d0" /><S d="M6 5l3-2M8 6l3-2" /></>],
];

const BAR_ICONS: [string, React.ReactNode][] = [
  ["Calendar", <><S d="M.5 1.500h13v11H.5z" s="#008000" f="#ffffff" /><S d="M1 2h13" s="#008000" w={3} /><S d="M2 6h5M2 9h4M4 4v7" s="#c03030" /><circle cx="11" cy="11" r="4.500" fill="#ffffff" stroke="#000000" /><S d="M11 8v3h3" /></>],
  ["Session", <><circle cx="5.500" cy="5.500" r="4.500" fill="#ffffff" stroke="#000000" /><S d="M5.500 3v3h3" /><S d="M4.500 12v4M8.500 10v4M11.500 2v8M14.500 4v8M11 5.500h4M10 9.500h2" s={NAVY} w={1} /></>],
  ["Bar chart", <><S d="M0 0h16v16H0z" s="none" f="#000000" /><S d="M2.500 3v7M5.500 5v6M8.500 4v7M11.500 2v7" s="#00ff00" /><S d="M0 13.500h16M13.500 0v16" s="#ff0000" /></>],
  ["OHLC", <><S d="M4 3v11M1 13.500h3M4 4.500h3M10 1v10M7 10.500h3M10 2.500h3" s={NAVY} w={2} /><S d="M15.500 1v14.500H1" s={GRAY} /></>],
  ["Candlestick", <><S d="M4.500 2v12" s={NAVY} /><S d="M3 4h3v8H3z" f={NAVY} s={NAVY} /><S d="M10.500 1v13" s={NAVY} /><S d="M8.500 3.500h4v8h-4z" f="#ffffff" s={NAVY} /><S d="M15.500 1v14.500H1" s={GRAY} /></>],
];

const SPACE_ICONS: [string, React.ReactNode][] = [
  ["Decrease spacing", <><S d="M8.500 1v14M11.500 4v10" s="#0000ff" /><S d="M0 8.500h5M3 6.500l3 2-3 2M12 8.500h4M15 6.500l-3 2 3 2" /></>],
  ["Increase spacing", <><S d="M1.500 1v12M14.500 6v9" s="#0000ff" /><S d="M3 7.500h4M5 5.500l-3 2 3 2M8 7.500h5M11 5.500l3 2-3 2" /></>],
];

const zoomIcon = (c: string, glass: string, d: string) => (
  <>
    <circle cx="6.500" cy="6.500" r="5.500" fill={glass} stroke={c} strokeWidth={1.5} />
    <S d={d} s={c} w={2} />
    <S d="M10.500 10.500l5 5" s={c === GRAY ? GRAY : NAVY} w={3} />
  </>
);

const ZOOM_ICONS: [string, React.ReactNode][] = [
  ["Zoom in", zoomIcon("#000000", "#e0ffff", "M3.500 6.500h6M6.500 3.500v6")],
  ["Zoom out", zoomIcon(GRAY, "#f4f4f4", "M3.500 6.500h6")],
];

const POINTER_ICONS: [string, React.ReactNode][] = [
  ["Pointer", <S d="M4.500 .5v12l3-3 2 5 2-1-2-5h3.500z" f="#ffffff" />],
  ["Data tip", <><S d="M0 1h13v10H0z" s="none" f="#000000" /><S d="M0 1.500h13" s="#0000ff" w={3} /><S d="M1 8l3-2 3 3 4-3" s="#00ff00" /><S d="M7 8h9v8H7z" s="none" f="#f0f0f0" /><S d="M8 9h8M12 9v7M10 15.500h4" w={2} /></>],
];

const TOOL_ICONS: [string, React.ReactNode][] = [
  ["Customize", <><S d="M3 15L13 4" s={OLIVE} w={3} /><S d="M12 1v4h4M14 4l-3 3" w={2} /><S d="M1 5l5-4 3 2-4 4z" f={OLIVE} /><S d="M6 6l8 9" w={2} /></>],
];

const ADD_ICONS: [string, React.ReactNode][] = [
  ["Add window", <><S d="M2 0v6M-1 3h6" s="#0000ff" w={2} /><S d="M6.500 .5h9v9h-9z" f="#ffff80" /><S d="M8 3.500h6M8 5.500h6M10.500 1v8" /><S d="M3.500 9.500h8v3h-8zM.5 11.500h8v4h-8z" f="#ffffff" s={NAVY} /></>],
];

const NOTE_ICONS: [string, React.ReactNode][] = [
  ["Comment", <><S d="M2 1h12v11h-1v3l-3-3H3z" f="#e8e8e8" s={GRAY} w={2} /><S d="M4 4h8M4 6.500h8M4 9h8M8 2v10" s={GRAY} /></>],
];

const DRAW_ICONS: [string, React.ReactNode][] = [
  ["Andrews pitchfork", <S d="M0 15l7-7M7 8L6 4l5-4M7 8l4 1 4-5M7 8l7-6M6 4l-1 1M11 9l-1 1" />],
  ["Time lines", <S d="M.5 0v16M3.500 0v16M6.500 0v16M10.500 0v16M15.500 0v16" />],
  ["Price lines", <S d="M0 1.500h16M0 5.500h16M0 10.500h16M0 15.500h16" />],
  ["Calculator", <><S d="M0 .5h16M0 3.500h16" /><S d="M3.500 4.500h9v11h-9z" f="#d0d8ff" s={NAVY} /><S d="M5 6.500h6" s={NAVY} w={2} /><S d="M5.500 9v6M8 9v6M10.500 9v6" s={NAVY} /></>],
  ["Speed arcs", <S d="M0 13.500h1q0-8 7-9M4 13.500q0-5 5-5M8 13.500q0-2 2-2M15.500 4L5 13M12 6q3 3 3 8" />],
  ["Fan lines", <><S d="M0 15.500h16" /><path d="M0 15L14 2M0 15L15 7M0 15L9 0M0 15l15-3" stroke="#000000" strokeDasharray="2 2" /></>],
  ["Retracement", <S d="M0 15l4-5 2 3 3-9v12M10.500 0v12M11 .5h5M11 3.500h5M11 6.500h5M11 9.500h5" />],
  ["Time zones", <S d="M0 2l4 6h2l2-3M7.500 2v14M11.500 0v16M15.500 0v16" />],
  ["Gann fan", <S d="M0 15.500h16M0 15L14 1M0 15L15 6M0 15l13-4M0 15L9 3" />],
  ["Extend", <S d="M2 7.500h12M5 4.500l-4 3 4 3M11 4.500l4 3-4 3" />],
  ["Parallel lines", <S d="M1 11L11 1M2 14L14 2M6 14l9-9" />],
  ["Cycle", <><S d="M.5 14V8q0-6 7-7 8 1 8 7v6" /><S d="M.5 14q1-6 3.500 0 2-6 4 0 2-6 4 0 2-6 3.500 0" /></>],
  ["Pencil", <><S d="M14 1l-7 9-1 4 3-3 7-9z" f="#ffff00" /><S d="M13 2l2-2 1 1-1 3z" f="#c00000" s="#600000" /><S d="M0 14.500h7" /></>],
];

const SHAPE_ICONS: [string, React.ReactNode][] = [
  ["Arc", <S d="M1 14q9 0 11-12" />],
  ["Down arrow", <S d="M7 3h3v6h2l-3.500 5L5 9h2z" f="#ff0000" s="none" />],
  ["Up arrow", <S d="M7 14h3V8h2L8.500 3 5 8h2z" f="#0000ff" s="none" />],
  ["Ellipse", <ellipse cx="8" cy="8" rx="7.500" ry="6" fill="none" stroke="#000000" />],
  ["Rectangle", <S d="M1.500 1.500h13v13h-13z" />],
];

function Icons({ list }: { list: [string, React.ReactNode][] }) {
  return (
    <>
      {list.map(([label, icon]) => (
        <button key={label} type="button" aria-label={label} className="flex h-6 w-[23px] items-center justify-center">
          <svg width="16" height="16" viewBox="0 0 16 16" overflow="visible">
            {icon}
          </svg>
        </button>
      ))}
    </>
  );
}

const Sep = () => <span className="mx-[3px] h-6 w-[2px] border-l border-r border-l-[#9a9a9a] border-r-white" />;
const Grip = () => <span className="mr-[3px] h-6 w-0 border-l-2 border-dotted border-[#b0b0b0]" />;

function Toolbar() {
  return (
    <div className="flex h-8 items-center border-b-2 border-[#808080] bg-[#f0f0f0]">
      <div className="flex w-[571px] items-center pl-3">
        <Grip />
        <Icons list={FILE_ICONS} />
        <Sep />
        <Icons list={PRINT_ICONS} />
        <Sep />
        <Icons list={WINDOW_ICONS} />
        <Sep />
        <div className="flex h-[27px] w-[136px] items-center border border-[#e0e0e0] bg-white font-['Open_Sans',sans-serif]">
          <input
            aria-label="Symbol"
            placeholder="Type a symbol/co"
            className="w-[116px] bg-white pl-[2px] text-[14px] placeholder:text-[#787878] outline-none"
          />
          <button type="button" aria-label="Show symbols" className="flex flex-1 items-center justify-center">
            <svg width="9" height="5" viewBox="0 0 9 5">
              <path d="M0 0h9L4.500 5z" />
            </svg>
          </button>
        </div>
        <button type="button" aria-label="Go" className="flex h-6 w-4 items-center justify-center">
          <svg width="5" height="10" viewBox="0 0 5 10">
            <path d="M0 0l5 5-5 5z" />
          </svg>
        </button>
        <button type="button" aria-label="Symbol lookup" className="ml-[9px] flex h-6 w-6 items-center justify-center">
          <svg width="18" height="17" viewBox="0 0 18 17" overflow="visible">
            <S d="M5.500 .5h11v9h-11z" s="#8090b8" f="#ffffff" />
            <S d="M6 2h11" s="#7080b0" w={3} />
            <S d="M.5 5.500h6v5h-6z" s="#5060a0" f="#d0d8ff" />
            <circle cx="10" cy="8" r="4.500" fill="#a0f0ff" stroke="#404040" />
            <S d="M13 11l4 5" w={2} />
          </svg>
        </button>
      </div>
      <div className="flex w-[596px] items-center pl-[11px]">
        <Grip />
        <Icons list={ORDER_ICONS} />
        <Sep />
        <Icons list={STUDY_ICONS} />
        <Sep />
        <Icons list={DATA_ICONS} />
        <Sep />
        <Icons list={BAR_ICONS} />
        <Sep />
        <Icons list={SPACE_ICONS} />
        <Sep />
        <Icons list={ZOOM_ICONS} />
        <Sep />
        <Icons list={POINTER_ICONS} />
        <Sep />
        <Icons list={TOOL_ICONS} />
        <Sep />
        <Icons list={ADD_ICONS} />
        <Sep />
        <Icons list={NOTE_ICONS} />
      </div>
      <div className="flex items-center pl-3">
        <Grip />
        <Icons list={DRAW_ICONS} />
        <Sep />
        <Icons list={SHAPE_ICONS} />
        <button type="button" className="h-6 w-[23px] text-center text-[12px] leading-6">
          abc
        </button>
      </div>
    </div>
  );
}

/* ---------- bottom ---------- */

function ScrollStrip() {
  return (
    <div className="flex h-[23px] items-center justify-between border-l-2 border-l-[#8a8a8a] bg-[#ececec] pl-[7px] pr-[10px]">
      <button type="button" aria-label="Scroll left">
        <svg width="5" height="9" viewBox="0 0 5 9" fill="#404040">
          <path d="M5 0v9L0 4.500z" />
        </svg>
      </button>
      <div className="flex items-center gap-[10px]">
        <button
          type="button"
          aria-label="Scroll position"
          className="flex h-[19px] w-[18px] items-center justify-center gap-[2px] rounded-sm border border-[#979797] bg-gradient-to-b from-[#f5f5f5] to-[#cfcfcf]"
        >
          <i className="h-2 w-[2px] bg-[#707070]" />
          <i className="h-2 w-[2px] bg-[#707070]" />
          <i className="h-2 w-[2px] bg-[#707070]" />
        </button>
        <button type="button" aria-label="Scroll right">
          <svg width="5" height="9" viewBox="0 0 5 9" fill="#404040">
            <path d="M0 0v9l5-4.500z" />
          </svg>
        </button>
      </div>
    </div>
  );
}

const TABS = [
  "STOX C164",
  "STOX C55",
  "STOX  C30",
  "STOX  8 Giorni",
  "FTSEMIB C164",
  "FTSEMIB C55",
  "FTSEMIB C30",
  "FTSEMIB  8 Giorni",
  "PERCENTUALE",
  "C164_3_Int",
  "FTSEMIB C4",
  "STOX  C4",
];

function Edge({ kind }: { kind: "first" | "mid" | "active" | "last" }) {
  return (
    <svg className="block h-[17px] w-[11px] shrink-0" viewBox="0 0 11 17" stroke="#000000" fill="none">
      {kind === "active" && <path d="M3 0l6 16h2V0z" fill="#ffffff" stroke="none" />}
      {kind === "last" && <path d="M0 0h9L3 16H0z" fill="#ffffff" stroke="none" />}
      {kind !== "last" && <path d="M2.500 0l6 16.500H11" />}
      {(kind === "mid" || kind === "active") && <path d="M5.500 9L2.500 16.500H0" />}
      {kind === "last" && <path d="M9 0L3 16.500H0" />}
    </svg>
  );
}

function Tabs() {
  const nav = [
    { label: "First", d: "M1.500 1v8M8 1v8L3.500 5z" },
    { label: "Previous", d: "M7 1v8L2.500 5z" },
    { label: "Next", d: "M3 1v8l4.500-4z" },
    { label: "Last", d: "M2 1v8l4.500-4zM8.500 1v8" },
  ];
  return (
    <div className="flex h-[18px] border-t border-b border-t-black border-b-[#808080] bg-[#f0f0f0]">
      {nav.map((n) => (
        <button
          key={n.label}
          type="button"
          aria-label={n.label}
          className="flex h-4 w-[17px] items-center justify-center border border-t-white border-l-white border-r-[#808080] border-b-[#808080]"
        >
          <svg width="10" height="10" viewBox="0 0 10 10" fill="#707070" stroke="#707070">
            <path d={n.d} />
          </svg>
        </button>
      ))}
      <Edge kind="first" />
      {TABS.map((t, i) => {
        const active = i === TABS.length - 1;
        return (
          <React.Fragment key={t}>
            <button
              type="button"
              className={`h-[17px] whitespace-pre border-b border-black px-[5px] text-[12px] leading-[15px] ${
                active ? "bg-white font-bold" : ""
              }`}
            >
              {t}
            </button>
            <Edge kind={active ? "last" : i === TABS.length - 2 ? "active" : "mid"} />
          </React.Fragment>
        );
      })}
    </div>
  );
}

function StatusBar() {
  const cells = [
    { t: "Acct:", c: "w-[51px]" },
    { t: "Open Psns:", c: "w-[91px]" },
    { t: "DT BP:", c: "w-[63px]" },
    { t: "Purch Pwr:", c: "w-[87px]" },
    { t: "Closed P/L:", c: "w-[93px]" },
    { t: "RT TE:", c: "w-[60px]" },
    { t: "Open P/L:", c: "w-[84px]" },
    { t: "ORDER BAR", c: "w-[88px] text-[#1a8a1a]" },
    { t: "MACROS", c: "w-[68px] text-[#1a8a1a]" },
  ];
  return (
    <footer className="flex h-[21px] items-center justify-between border-b-2 border-[#8498b4] bg-[#f0eeec] pt-[1px] font-['Open_Sans',sans-serif] text-[14px] leading-[19px]">
      <span className="pl-[2px]">For Help, press F1</span>
      <div className="flex whitespace-nowrap">
        {cells.map((s) => (
          <span key={s.t} className={`border-r border-[#d0cfce] pl-[5px] ${s.c}`}>
            {s.t}
          </span>
        ))}
        <span className="flex w-[19px] items-center justify-center border-r border-[#d0cfce]">
          <svg width="12" height="12" viewBox="0 0 12 12">
            <circle cx="6" cy="6" r="5" fill="#d80000" stroke="#400000" />
            <circle cx="4" cy="4" r="1.500" fill="#ffffff" />
          </svg>
        </span>
        <span className="w-[124px] pl-[5px]">25/11/2024 14:47</span>
      </div>
    </footer>
  );
}

export default function App() {
  return (
    <div className="min-h-screen overflow-x-hidden bg-[#f0f0f0] font-['Liberation_Sans',Arial,sans-serif] text-black">
      <TitleBar />
      <MenuBar />
      <Toolbar />
      <Chart />
      <ScrollStrip />
      <Tabs />
      <StatusBar />
    </div>
  );
}
